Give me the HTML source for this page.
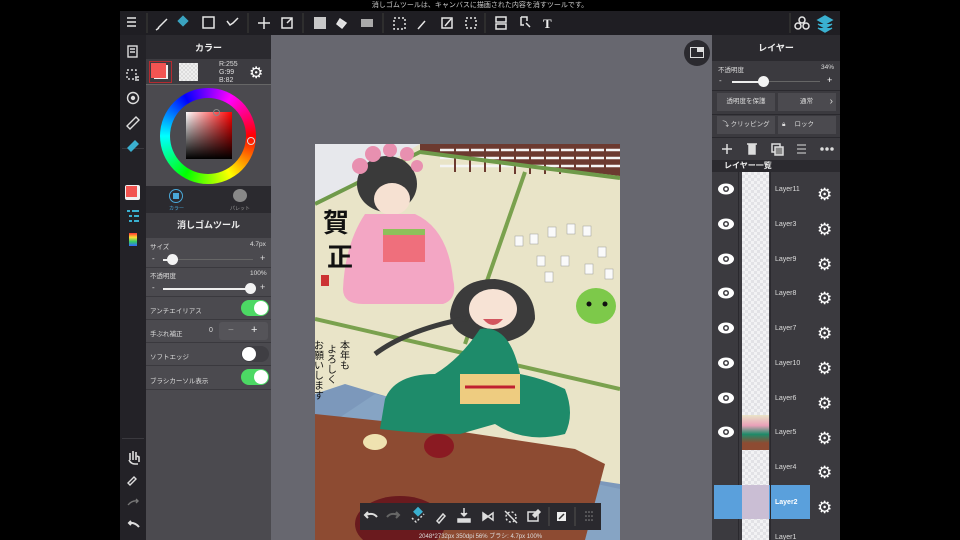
<!DOCTYPE html>
<html><head><meta charset="utf-8">
<style>
*{margin:0;padding:0;box-sizing:border-box}
html,body{width:960px;height:540px;overflow:hidden}
body{background:#000;position:relative;font-family:"Liberation Sans","Noto Sans CJK JP",sans-serif;color:#ddd}
.a{position:absolute}
</style></head><body>
<!-- status -->
<div class="a" style="left:120px;top:0;width:720px;height:11px;background:#000;font-size:7px;color:#ccc;text-align:center;line-height:11px">消しゴムツールは、キャンバスに描画された内容を消すツールです。</div>
<!-- toolbar -->
<div class="a" style="left:120px;top:11px;width:720px;height:24px;background:#1f1e23"></div>
<svg class="a" style="left:120px;top:11px" width="720" height="24" fill="none" stroke="#e6e6e6" stroke-width="1.5">
<path d="M7 7h9M7 11h9M7 15h9"/>
<line x1="27" y1="2" x2="27" y2="22" stroke="#333"/>
<path d="M38 17l9-9"/><path d="M36 19l3-2"/>
<rect x="59" y="6" width="8" height="8" fill="#3aa3c0" stroke="none" transform="rotate(45 63 10)"/>
<rect x="83" y="6" width="11" height="11"/>
<path d="M107 10l3 4 3-2 5-5"/>
<line x1="128" y1="2" x2="128" y2="22" stroke="#333"/>
<path d="M144 6v12M138 12h12"/>
<rect x="162" y="7" width="10" height="10"/><path d="M167 12l5-5"/>
<line x1="183" y1="2" x2="183" y2="22" stroke="#333"/>
<rect x="194" y="6" width="12" height="12" fill="#c8c8c8" stroke="none"/>
<path d="M220 8l6 4-4 5-5-4z" fill="#ddd"/>
<rect x="241" y="8" width="12" height="8" fill="#aaa" stroke="none"/>
<line x1="263" y1="2" x2="263" y2="22" stroke="#333"/>
<rect x="274" y="7" width="11" height="11" stroke-dasharray="2 2"/>
<path d="M298 18l7-8"/>
<rect x="322" y="7" width="10" height="10"/><path d="M325 15l6-7"/>
<rect x="346" y="7" width="10" height="10" stroke-dasharray="2 2"/>
<line x1="365" y1="2" x2="365" y2="22" stroke="#333"/>
<rect x="376" y="6" width="10" height="5"/><rect x="376" y="13" width="10" height="5"/>
<path d="M401 6h6v4M401 6v8h3M406 12l4 4"/>
<text x="423" y="17" fill="#eee" stroke="none" font-family="Liberation Serif" font-weight="bold" font-size="13">T</text>
<line x1="670" y1="2" x2="670" y2="22" stroke="#333"/>
<circle cx="682" cy="9" r="3"/><circle cx="678" cy="15" r="3"/><circle cx="686" cy="15" r="3"/>
<path d="M698 9l7-4 7 4-7 4z M698 13l7 4 7-4 M698 17l7 4 7-4" stroke="#3ab0d0" fill="#3ab0d0"/>
</svg>
<!-- left icon column -->
<div class="a" style="left:120px;top:35px;width:26px;height:505px;background:#232227"></div>
<div class="a" style="left:122px;top:148px;width:22px;height:1px;background:#3a393e"></div>
<div class="a" style="left:122px;top:438px;width:22px;height:1px;background:#3a393e"></div>
<svg class="a" style="left:120px;top:35px" width="26" height="505" fill="none" stroke="#ddd" stroke-width="1.4">
<rect x="8" y="11" width="9" height="11"/><path d="M10 14h5M10 17h5"/>
<rect x="7" y="35" width="9" height="9" stroke-dasharray="2 2"/><path d="M15 42h4M15 45h4"/>
<circle cx="13" cy="63" r="5.5"/><circle cx="13" cy="63" r="1.5" fill="#ddd"/>
<path d="M7 91l9-9 3 3-9 9z"/>
<path d="M8 113l7-7 3 3-7 7z" fill="#3ab0d0" stroke="#3ab0d0"/>
<rect x="5" y="150" width="15" height="15" rx="2" fill="#f0f0f0" stroke="none"/><rect x="6" y="151" width="11" height="11" fill="#f25450" stroke="none"/>
<path d="M7 176h3M12 176h7M9 181h3M14 181h5M9 186h3M14 186h5" stroke="#3ab0d0" stroke-width="2"/>
<rect x="9" y="198" width="8" height="13" fill="url(#rb)" stroke="none"/>
<path d="M10 425v-7m3 7v-9m3 9v-8m3 10v-5l-2 -1M9 425q2 4 6 4h3" stroke-width="1.6"/>
<path d="M8 448l6-6 2 2-6 6z"/>
<path d="M8 470q4-5 10-4m-2-2l2 2-2 2" stroke="#777"/>
<path d="M19 492q-4-5-10-4m2-2l-2 2 2 2" stroke-width="2"/>
<defs><linearGradient id="rb" x1="0" y1="0" x2="0" y2="1"><stop offset="0" stop-color="#f33"/><stop offset=".33" stop-color="#fd3"/><stop offset=".66" stop-color="#3c6"/><stop offset="1" stop-color="#36f"/></linearGradient></defs>
</svg>
<!-- color panel -->
<div class="a" style="left:146px;top:35px;width:125px;height:505px;background:#4b4a4f"></div>
<div class="a" style="left:146px;top:35px;width:125px;height:24px;background:#2b2a2f;font-size:9px;font-weight:bold;color:#eee;text-align:center;line-height:26px">カラー</div>
<div class="a" style="left:146px;top:59px;width:125px;height:26px;background:#3d3c41;border-bottom:1px solid #666"></div>
<div class="a" style="left:149px;top:61px;width:23px;height:22px;border:1px solid #b52a30;background:#3d3c41"></div>
<div class="a" style="left:154px;top:65px;width:14px;height:14px;background:#f0f0f0"></div>
<div class="a" style="left:151px;top:63px;width:15px;height:15px;background:#f25452"></div>
<div class="a" style="left:179px;top:63px;width:19px;height:18px;background:#eee;background-image:linear-gradient(45deg,#ddd 25%,transparent 25%,transparent 75%,#ddd 75%),linear-gradient(45deg,#ddd 25%,transparent 25%,transparent 75%,#ddd 75%);background-size:4px 4px;background-position:0 0,2px 2px"></div>
<div class="a" style="left:219px;top:61px;font-size:7px;line-height:8px;color:#ddd">R:255<br>G:99<br>B:82</div>
<div class="a" style="left:249px;top:63px;font-size:16px;color:#fff">⚙</div>
<div class="a" style="left:160px;top:88px;width:96px;height:96px;border-radius:50%;background:conic-gradient(from 90deg,#f00,#ff0,#0f0,#0ff,#00f,#f0f,#f00)"></div>
<div class="a" style="left:170px;top:98px;width:76px;height:76px;border-radius:50%;background:#4b4a4f"></div>
<div class="a" style="left:186px;top:112px;width:46px;height:47px;background:linear-gradient(to top,#000,transparent),linear-gradient(to right,#fff,#f00)"></div>
<div class="a" style="left:213px;top:109px;width:7px;height:7px;border-radius:50%;border:1px solid #888"></div>
<div class="a" style="left:247px;top:137px;width:8px;height:8px;border-radius:50%;border:1px solid #ddd"></div>
<div class="a" style="left:146px;top:186px;width:125px;height:27px;background:#2b2a2f"></div>
<div class="a" style="left:169px;top:189px;width:14px;height:14px;border-radius:50%;border:1.5px solid #4aa8d8"></div>
<div class="a" style="left:173px;top:193px;width:6px;height:6px;background:#4aa8d8"></div>
<div class="a" style="left:169px;top:205px;font-size:5px;color:#4aa8d8">カラー</div>
<div class="a" style="left:233px;top:189px;width:14px;height:13px;border-radius:50%;background:#888"></div>
<div class="a" style="left:230px;top:205px;font-size:5px;color:#999">パレット</div>
<div class="a" style="left:146px;top:213px;width:125px;height:25px;background:#3b3a3f;font-size:9px;font-weight:bold;color:#eee;text-align:center;line-height:25px">消しゴムツール</div>
<div class="a" style="left:150px;top:241px;font-size:6.5px">サイズ</div><div class="a" style="left:250px;top:241px;font-size:6.5px">4.7px</div>
<div class="a" style="left:152px;top:254px;font-size:8px">-</div><div class="a" style="left:260px;top:253px;font-size:9px">+</div>
<div class="a" style="left:163px;top:259px;width:90px;height:1px;background:#666"></div>
<div class="a" style="left:163px;top:259px;width:10px;height:2px;background:#eee"></div>
<div class="a" style="left:167px;top:254px;width:11px;height:11px;border-radius:50%;background:#f3f3f3"></div>
<div class="a" style="left:146px;top:267px;width:125px;height:1px;background:#3a393e"></div>
<div class="a" style="left:150px;top:270px;font-size:6.5px">不透明度</div><div class="a" style="left:250px;top:270px;font-size:6.5px">100%</div>
<div class="a" style="left:152px;top:283px;font-size:8px">-</div><div class="a" style="left:260px;top:282px;font-size:9px">+</div>
<div class="a" style="left:163px;top:288px;width:88px;height:2px;background:#eee"></div>
<div class="a" style="left:245px;top:283px;width:11px;height:11px;border-radius:50%;background:#f3f3f3"></div>
<div class="a" style="left:146px;top:296px;width:125px;height:1px;background:#3a393e"></div>
<div class="a" style="left:150px;top:305px;font-size:6.5px">アンチエイリアス</div>
<div class="a" style="left:241px;top:300px;width:28px;height:16px;border-radius:8px;background:#4cd964"></div><div class="a" style="left:254px;top:301px;width:14px;height:14px;border-radius:50%;background:#fff"></div>
<div class="a" style="left:146px;top:319px;width:125px;height:1px;background:#3a393e"></div>
<div class="a" style="left:150px;top:328px;font-size:6.5px">手ぶれ補正</div><div class="a" style="left:209px;top:327px;font-size:7px">0</div>
<div class="a" style="left:219px;top:322px;width:49px;height:18px;background:#555459;border-radius:3px"></div>
<div class="a" style="left:228px;top:325px;font-size:10px;color:#999">−</div><div class="a" style="left:251px;top:324px;font-size:11px;color:#eee">+</div>
<div class="a" style="left:146px;top:342px;width:125px;height:1px;background:#3a393e"></div>
<div class="a" style="left:150px;top:351px;font-size:6.5px">ソフトエッジ</div>
<div class="a" style="left:241px;top:346px;width:28px;height:16px;border-radius:8px;background:#3f3e43"></div><div class="a" style="left:242px;top:347px;width:14px;height:14px;border-radius:50%;background:#fff"></div>
<div class="a" style="left:146px;top:365px;width:125px;height:1px;background:#3a393e"></div>
<div class="a" style="left:150px;top:375px;font-size:6.5px">ブラシカーソル表示</div>
<div class="a" style="left:241px;top:369px;width:28px;height:16px;border-radius:8px;background:#4cd964"></div><div class="a" style="left:254px;top:370px;width:14px;height:14px;border-radius:50%;background:#fff"></div>
<div class="a" style="left:146px;top:389px;width:125px;height:1px;background:#3a393e"></div>
<!-- canvas area -->
<div class="a" style="left:271px;top:35px;width:442px;height:505px;background:#67676f"></div>
<div class="a" style="left:684px;top:40px;width:26px;height:26px;border-radius:50%;background:#2b2a2f"></div>
<div class="a" style="left:690px;top:47px;width:14px;height:11px;border:1.5px solid #ddd"></div>
<div class="a" style="left:697px;top:48px;width:6px;height:4px;background:#ddd"></div>
<!-- artwork -->
<svg class="a" style="left:315px;top:144px" width="305" height="396">
<rect width="305" height="396" fill="#e9e4c8"/>
<polygon points="0,0 105,0 10,55 0,60" fill="#e7e8ec"/>
<polygon points="105,0 305,0 305,32 105,8" fill="#6c3a30"/>
<g stroke="#f4f4f4" stroke-width="2.5"><path d="M125 6h180M125 14h180M125 22h180"/></g>
<g stroke="#6c3a30" stroke-width="2"><path d="M140 0v28M155 0v28M170 0v28M185 0v28M200 0v30M215 0v30M230 0v30M245 0v30M260 0v30M275 0v30M290 0v30"/></g>
<path d="M0 60L105 8 305 34" stroke="#6f9a4a" stroke-width="4" fill="none"/>
<path d="M210 28L150 200" stroke="#7aa14e" stroke-width="4"/>
<path d="M0 175L305 245" stroke="#7aa14e" stroke-width="4"/>
<polygon points="0,250 30,240 80,255 150,300 240,330 305,340 305,396 0,396" fill="#7c98bb"/>
<polygon points="0,290 60,250 120,265 190,320 305,345 305,396 0,396" fill="#86a4c4"/>
<polygon points="0,270 95,280 260,305 290,320 270,396 0,396" fill="#8d4b32"/>
<ellipse cx="85" cy="380" rx="45" ry="28" fill="#6a1a1e"/>
<ellipse cx="124" cy="302" rx="15" ry="12" fill="#8a1a22"/>
<ellipse cx="60" cy="298" rx="12" ry="8" fill="#efe2b0"/>
<!-- pink girl -->
<ellipse cx="72" cy="40" rx="30" ry="28" fill="#3a3a3a"/>
<ellipse cx="77" cy="55" rx="18" ry="16" fill="#f6e1d2"/>
<g fill="#e890b0"><circle cx="45" cy="22" r="8"/><circle cx="58" cy="10" r="8"/><circle cx="75" cy="6" r="7"/><circle cx="92" cy="10" r="7"/><circle cx="102" cy="22" r="6"/></g>
<path d="M50 70q-20 30-22 75q0 15 20 15h80q15-5 10-25q-5-50-38-65z" fill="#f3a6c4"/>
<rect x="68" y="88" width="42" height="30" fill="#ef6f7c"/>
<rect x="68" y="85" width="42" height="6" fill="#8ec05a"/>
<!-- green girl -->
<path d="M135 170q5-35 45-35q40 5 40 40q-5 20-40 25q-45-5-45-30z" fill="#3b3b3b"/>
<path d="M180 170q-80 10-120 40" stroke="#3b3b3b" stroke-width="5" fill="none"/>
<ellipse cx="178" cy="165" rx="24" ry="20" fill="#f7e3d5"/>
<path d="M168 175q10 12 20 0z" fill="#d2555f"/>
<path d="M120 230q-40 0-50 25l-5 30q40 5 80 5l35-10q30 20 70 10q10-20 0-45q-20-10-45-15q-10-50-40-45q-20 30-45 45z" fill="#1e8b6a"/>
<rect x="145" y="230" width="60" height="30" fill="#eecc80"/>
<path d="M150 243h50" stroke="#c02030" stroke-width="3"/>
<ellipse cx="281" cy="162" rx="20" ry="18" fill="#7dc94a"/>
<circle cx="274" cy="160" r="2.5" fill="#111"/><circle cx="290" cy="160" r="2.5" fill="#111"/>
<g fill="#fafafa" stroke="#999" stroke-width=".5"><rect x="200" y="92" width="8" height="10"/><rect x="215" y="90" width="8" height="10"/><rect x="233" y="83" width="8" height="10"/><rect x="252" y="80" width="8" height="10"/><rect x="268" y="82" width="8" height="10"/><rect x="283" y="103" width="8" height="10"/><rect x="222" y="112" width="8" height="10"/><rect x="246" y="112" width="8" height="10"/><rect x="230" y="128" width="8" height="10"/><rect x="270" y="120" width="8" height="10"/><rect x="290" y="125" width="8" height="10"/></g>
<text x="8" y="88" font-family="Noto Sans CJK JP,sans-serif" font-weight="bold" font-size="26" fill="#111">賀</text>
<text x="12" y="122" font-family="Noto Sans CJK JP,sans-serif" font-weight="bold" font-size="26" fill="#111">正</text>
<rect x="6" y="131" width="8" height="11" fill="#c33"/>
<text x="30" y="196" font-family="Noto Sans CJK JP,sans-serif" font-size="10" fill="#111" writing-mode="tb">本年も</text>
<text x="17" y="200" font-family="Noto Sans CJK JP,sans-serif" font-size="10" fill="#111" writing-mode="tb">よろしく</text>
<text x="4" y="196" font-family="Noto Sans CJK JP,sans-serif" font-size="10" fill="#111" writing-mode="tb">お願いします</text>
</svg>
<!-- bottom tool bar -->
<div class="a" style="left:360px;top:503px;width:241px;height:27px;background:#2a292e"></div>
<svg class="a" style="left:360px;top:503px" width="241" height="27" fill="none" stroke="#ddd" stroke-width="1.5">
<path d="M17 14q-4-5-11-2m2-3l-3 3 3 3" stroke-width="2"/>
<path d="M27 14q4-5 11-2m-2-3l3 3-3 3" stroke="#666" stroke-width="2"/>
<rect x="55" y="5" width="7" height="7" fill="#3ab0d0" stroke="none" transform="rotate(45 58 8)"/><path d="M52 15l4 4 8-8" stroke-dasharray="2 2"/>
<path d="M77 18l6-7 2 2-6 7z"/>
<path d="M104 5v8m-3-3l3 3 3-3M98 16h12v3h-12z" fill="#ddd"/>
<path d="M123 10v7l5-3.5z" fill="#ddd"/><path d="M133 10v7l-5-3.5z"/>
<circle cx="151" cy="14" r="5" stroke-dasharray="2 2"/><path d="M145 8l12 12"/>
<rect x="168" y="9" width="10" height="9"/><path d="M173 12l5-5 2 2-5 5z" fill="#ddd"/>
<line x1="189" y1="4" x2="189" y2="23" stroke="#444"/>
<rect x="197" y="9" width="9" height="9" fill="#eee" stroke="none"/><path d="M199 16l5-5" stroke="#333"/>
<line x1="215" y1="4" x2="215" y2="23" stroke="#444"/>
<g fill="#888" stroke="none"><circle cx="226" cy="9" r=".8"/><circle cx="229" cy="9" r=".8"/><circle cx="232" cy="9" r=".8"/><circle cx="226" cy="13" r=".8"/><circle cx="229" cy="13" r=".8"/><circle cx="232" cy="13" r=".8"/><circle cx="226" cy="17" r=".8"/><circle cx="229" cy="17" r=".8"/><circle cx="232" cy="17" r=".8"/></g>
</svg>
<div class="a" style="left:360px;top:531px;width:241px;font-size:6px;color:#ddd;text-align:center">2048*2732px 350dpi 56% ブラシ: 4.7px 100%</div>
<!-- right layer panel -->
<div class="a" style="left:712px;top:35px;width:128px;height:505px;background:#3b3a3f"></div>
<div class="a" style="left:712px;top:35px;width:128px;height:26px;background:#2b2a2f;font-size:9px;font-weight:bold;color:#eee;text-align:center;line-height:26px">レイヤー</div>
<div class="a" style="left:718px;top:64px;font-size:6.5px">不透明度</div><div class="a" style="left:821px;top:64px;font-size:6.5px">34%</div>
<div class="a" style="left:719px;top:76px;font-size:8px">-</div><div class="a" style="left:827px;top:75px;font-size:9px;color:#fff">+</div>
<div class="a" style="left:732px;top:81px;width:88px;height:1px;background:#666"></div>
<div class="a" style="left:732px;top:81px;width:31px;height:2px;background:#eee"></div>
<div class="a" style="left:758px;top:76px;width:11px;height:11px;border-radius:50%;background:#f3f3f3"></div>
<div class="a" style="left:712px;top:90px;width:128px;height:1px;background:#2a292e"></div>
<div class="a" style="left:717px;top:93px;width:58px;height:18px;background:#4b4a4f;font-size:6.5px;text-align:center;line-height:18px">透明度を保護</div>
<div class="a" style="left:778px;top:93px;width:58px;height:18px;background:#4b4a4f;font-size:6.5px;line-height:18px;padding-left:22px">通常<span style="position:absolute;right:3px;top:0;font-size:10px">›</span></div>
<div class="a" style="left:712px;top:114px;width:128px;height:1px;background:#2a292e"></div>
<div class="a" style="left:717px;top:116px;width:58px;height:18px;background:#4b4a4f;font-size:6.5px;text-align:center;line-height:18px">⤵ クリッピング</div>
<div class="a" style="left:778px;top:116px;width:58px;height:18px;background:#4b4a4f;font-size:6.5px;line-height:18px;padding-left:4px">🔒︎ &nbsp;&nbsp;&nbsp;&nbsp;ロック</div>
<div class="a" style="left:712px;top:137px;width:128px;height:1px;background:#2a292e"></div>
<svg class="a" style="left:712px;top:139px" width="128" height="20" fill="none" stroke="#ddd" stroke-width="1.5">
<path d="M15 5v10M10 10h10"/><rect x="37" y="6" width="6" height="9" fill="#ddd"/><path d="M35 5h10"/>
<rect x="60" y="5" width="8" height="8"/><rect x="63" y="8" width="8" height="8" fill="#888"/>
<path d="M85 6h9M85 10h9M85 14h9" stroke-width="1"/>
<circle cx="110" cy="10" r="1" fill="#ddd"/><circle cx="115" cy="10" r="1" fill="#ddd"/><circle cx="120" cy="10" r="1" fill="#ddd"/>
</svg>
<div class="a" style="left:712px;top:160px;width:128px;height:12px;background:#2b2a2f;font-size:8px;font-weight:bold;color:#eee;padding-left:12px;line-height:12px">レイヤー一覧</div>
<div class="a" style="left:738px;top:172px;width:1px;height:368px;background:#2a292e"></div>
<div class="a" style="left:742px;top:172px;width:27px;height:368px;background:#f2f2f4;background-image:linear-gradient(45deg,#e2e2e6 25%,transparent 25%,transparent 75%,#e2e2e6 75%),linear-gradient(45deg,#e2e2e6 25%,transparent 25%,transparent 75%,#e2e2e6 75%);background-size:6px 6px;background-position:0 0,3px 3px"></div>
<div class="a" style="left:742px;top:415px;width:27px;height:35px;background:linear-gradient(#e9e4c8 0,#e9a0b8 30%,#1e8b6a 55%,#8d4b32 80%)"></div>
<div class="a" style="left:714px;top:485px;width:96px;height:34px;background:#5aa0dc"></div>
<div class="a" style="left:742px;top:485px;width:27px;height:34px;background:rgba(240,200,210,.75)"></div>
<div class="a" style="left:770px;top:172px;width:1px;height:368px;background:#2a292e"></div>
<svg class="a" style="left:714px;top:172px" width="24" height="368">
<g fill="#fff">
<g id="e"><ellipse cx="12" cy="17" rx="8" ry="5.5"/><circle cx="12" cy="17" r="3" fill="#3b3a3f"/><circle cx="12" cy="17" r="1.5"/></g>
<use href="#e" y="35"/><use href="#e" y="70"/><use href="#e" y="104"/><use href="#e" y="139"/><use href="#e" y="174"/><use href="#e" y="209"/><use href="#e" y="243"/>
</g></svg>
<div class="a" style="left:775px;top:184px;font-size:7px;line-height:175%;color:#ddd">
<div style="height:35px">Layer11</div><div style="height:34.5px">Layer3</div><div style="height:34.8px">Layer9</div><div style="height:34.8px">Layer8</div><div style="height:34.8px">Layer7</div><div style="height:34.8px">Layer10</div><div style="height:34.8px">Layer6</div><div style="height:34.8px">Layer5</div><div style="height:34.8px">Layer4</div><div style="height:34.8px;color:#fff;font-weight:bold">Layer2</div><div>Layer1</div></div>
<div class="a" style="left:817px;top:178px;font-size:17px;line-height:34.8px;color:#fff">⚙<br>⚙<br>⚙<br>⚙<br>⚙<br>⚙<br>⚙<br>⚙<br>⚙<br>⚙</div>
</body></html>
